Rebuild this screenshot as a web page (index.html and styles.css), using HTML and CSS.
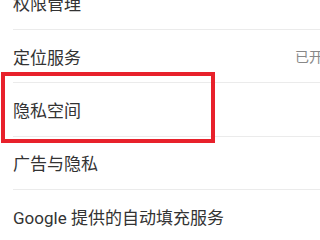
FILE: index.html
```html
<!DOCTYPE html>
<html lang="zh-CN">
<head>
  <meta charset="UTF-8" />
  <meta name="viewport" content="width=device-width, initial-scale=1.0"/>
  <title>隐私</title>
  <link rel="stylesheet" href="styles.css">
</head>
<body>
  <ul class="settings">
    <li class="item"><span class="label">权限管理</span></li>
    <li class="item">
      <span class="label">定位服务</span>
      <span class="value">已开启</span>
    </li>
    <li class="item highlighted">
      <span class="label">隐私空间</span>
      <div class="mark"></div>
    </li>
    <li class="item"><span class="label">广告与隐私</span></li>
    <li class="item"><span class="label">Google 提供的自动填充服务</span></li>
  </ul>
</body>
</html>
```

FILE: styles.css
```css
body {
  margin: 0;
  background: #fff;
  overflow: hidden;
  font-family: Roboto, "Noto Sans CJK SC", sans-serif;
}

.settings {
  list-style: none;
  margin: -23.5px 0 0 0;
  padding: 0;
  width: 350px;
}

.item {
  position: relative;
  display: flex;
  align-items: center;
  justify-content: space-between;
  height: 53.4px;
  box-sizing: border-box;
  margin-left: 13px;
  padding-right: 13px;
  border-bottom: 1px solid #ebebeb;
}

.label {
  font-size: 17px;
  color: #333;
}

.value {
  font-size: 14px;
  color: #888;
}

.mark {
  position: absolute;
  left: -12px;
  top: -11px;
  width: 214px;
  height: 71px;
  box-sizing: border-box;
  border: 4px solid #e8212b;
}
```
